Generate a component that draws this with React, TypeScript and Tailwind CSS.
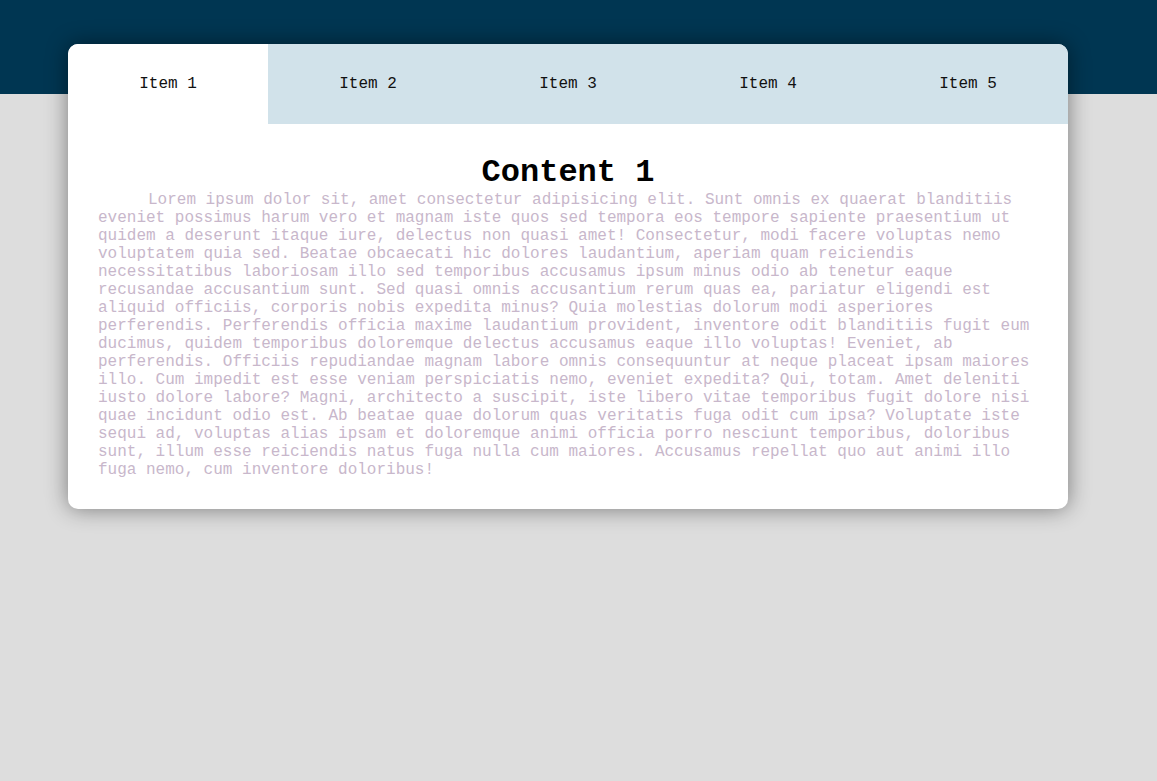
import React, { useState } from "react";

const text =
  "Lorem ipsum dolor sit, amet consectetur adipisicing elit. Sunt omnis ex quaerat blanditiis eveniet possimus harum vero et magnam iste quos sed tempora eos tempore sapiente praesentium ut quidem a deserunt itaque iure, delectus non quasi amet! Consectetur, modi facere voluptas nemo voluptatem quia sed. Beatae obcaecati hic dolores laudantium, aperiam quam reiciendis necessitatibus laboriosam illo sed temporibus accusamus ipsum minus odio ab tenetur eaque recusandae accusantium sunt. Sed quasi omnis accusantium rerum quas ea, pariatur eligendi est aliquid officiis, corporis nobis expedita minus? Quia molestias dolorum modi asperiores perferendis. Perferendis officia maxime laudantium provident, inventore odit blanditiis fugit eum ducimus, quidem temporibus doloremque delectus accusamus eaque illo voluptas! Eveniet, ab perferendis. Officiis repudiandae magnam labore omnis consequuntur at neque placeat ipsam maiores illo. Cum impedit est esse veniam perspiciatis nemo, eveniet expedita? Qui, totam. Amet deleniti iusto dolore labore? Magni, architecto a suscipit, iste libero vitae temporibus fugit dolore nisi quae incidunt odio est. Ab beatae quae dolorum quas veritatis fuga odit cum ipsa? Voluptate iste sequi ad, voluptas alias ipsam et doloremque animi officia porro nesciunt temporibus, doloribus sunt, illum esse reiciendis natus fuga nulla cum maiores. Accusamus repellat quo aut animi illo fuga nemo, cum inventore doloribus!";

export default function App() {
  const [active, setActive] = useState(0);
  const items = ["Item 1", "Item 2", "Item 3", "Item 4", "Item 5"];
  return (
    <div
      className="min-h-[781px] w-full bg-[#dddddd] bg-[linear-gradient(#003652_0,#003652_94px,#dddddd_94px)]"
      style={{ fontFamily: '"Liberation Mono", "Courier New", monospace' }}
    >
      <div className="pt-[44px] pl-[68px]">
        <div className="w-[1000px] bg-white rounded-[10px] overflow-hidden shadow-[0_0_22px_rgba(0,0,0,0.45)]">
          <div className="flex">
            {items.map((it, i) => (
              <button
                key={it}
                onClick={() => setActive(i)}
                className={`w-[200px] h-[80px] flex items-center justify-center text-[16px] text-[#111111] ${
                  active === i ? "bg-white" : "bg-[#d1e2ea]"
                }`}
              >
                {it}
              </button>
            ))}
          </div>
          <div className="px-[30px] pt-[31px] pb-[30px]">
            <h1 className="text-center text-[32px] leading-[36px] font-bold text-black">
              Content {active + 1}
            </h1>
            <p className="text-[16px] leading-[18px] text-[#c8b7cb] indent-[50px]">
              {text}
            </p>
          </div>
        </div>
      </div>
    </div>
  );
}
